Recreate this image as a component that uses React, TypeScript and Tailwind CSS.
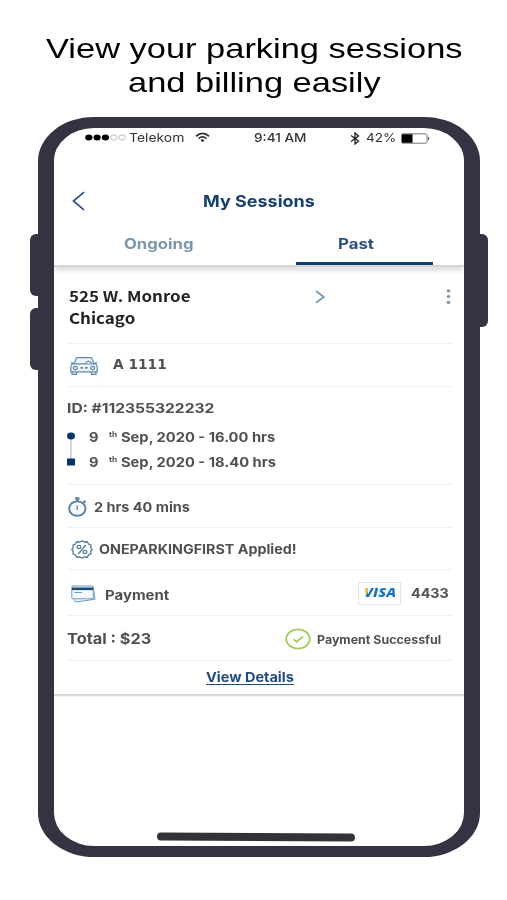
import React from 'react';
import clsx from 'clsx';

interface WideProps {
  className?: string;
  children: React.ReactNode;
}

// Extended lettering: glyphs are stretched from their left edge
const Wide: React.FC<WideProps> = ({ className, children }) => (
  <span className={clsx('block w-max origin-left whitespace-pre leading-none', className)}>{children}</span>
);

const StatusBar: React.FC = () => (
  <div className="flex h-[20px] items-center pl-[31px] text-[#333]">
    <svg className="w-[42px] shrink-0" height="8" viewBox="0 0 42 8">
      <g fill="#000">
        <ellipse cx="3.8" cy="3.5" rx="3.6" ry="3" />
        <ellipse cx="12.1" cy="3.5" rx="3.6" ry="3" />
        <ellipse cx="20.4" cy="3.5" rx="3.6" ry="3" />
      </g>
      <g fill="#fff" stroke="#aaa" strokeWidth="0.8">
        <ellipse cx="28.8" cy="3.5" rx="3.2" ry="2.7" />
        <ellipse cx="37" cy="3.5" rx="3.2" ry="2.7" />
      </g>
    </svg>
    <div className="w-[68px] pb-[1px] pl-[2px]">
      <Wide className="scale-x-[1.16] text-[12px]">Telekom</Wide>
    </div>
    <svg className="mb-[2px] w-[15px] shrink-0" height="11" viewBox="0 0 15 11" fill="none" stroke="#333" strokeWidth="1.8">
      <path d="M1 4.2 Q7.5 -1.4 14 4.2" />
      <path d="M3.5 6.6 Q7.5 3.2 11.5 6.6" />
      <path d="M5.4 8 Q7.5 6.6 9.6 8 L7.5 10.3Z" fill="#333" stroke="none" />
    </svg>
    <div className="w-[96px] pl-[44px]">
      <Wide className="scale-x-[1.13] text-[12px] font-medium">9:41 AM</Wide>
    </div>
    <svg className="ml-[44px] w-[10px] shrink-0" height="13" viewBox="0 0 10 13" fill="none" stroke="#222" strokeWidth="1.3">
      <path d="M1 3.5 L8.5 9 L5 12 V1 L8.5 4 L1 9.5" />
    </svg>
    <div className="w-[41px] pl-[6px]">
      <Wide className="scale-x-[1.13] text-[12px]">42%</Wide>
    </div>
    <svg className="w-[30px] shrink-0" height="11" viewBox="0 0 30 11">
      <rect x="0.5" y="0.8" width="25.5" height="9.4" rx="1.5" fill="#fff" stroke="#777" />
      <path d="M1 1.3 H11.5 V9.7 H1Z" fill="#000" />
      <path d="M27 3.5 Q29.5 5.5 27 7.5Z" fill="#444" />
    </svg>
  </div>
);

const Header: React.FC = () => (
  <div className="relative z-10 h-[119px] border-b-2 border-[#d5d5d5] bg-white shadow-[0_5px_4px_-1px_rgba(0,0,0,0.12)]">
    <div className="flex h-[73px] items-end pb-[9px] pl-[18px]">
      <svg className="mb-[1px] w-[13px]" height="20" viewBox="0 0 13 20" fill="none" stroke="#2a5288" strokeWidth="1.7">
        <path d="M12 1.2 L1.5 10 L12 18.8" />
      </svg>
      <div className="pb-[3px] pl-[118px]">
        <Wide className="scale-x-[1.09] text-[16.5px] font-bold text-[#17406f]">My Sessions</Wide>
      </div>
    </div>
    <div className="flex h-[44px] font-bold">
      <div className="w-[242px] pl-[70px] pt-[16px]">
        <Wide className="scale-x-[1.15] text-[14.5px] text-[#7b97ab]">Ongoing</Wide>
      </div>
      <div className="h-[44px] w-[137px] border-b-[3px] border-[#163d70] pl-[42px] pt-[16px]">
        <Wide className="scale-x-[1.16] text-[14.5px] text-[#2b5080]">Past</Wide>
      </div>
    </div>
  </div>
);

const CarIcon: React.FC = () => (
  <svg className="w-[28px] shrink-0" height="18" viewBox="0 0 28 18" fill="#eef4f8" stroke="#5f88a8" strokeWidth="1.2">
    <path d="M2 14 V17.3 H6.5 V14 M21.5 14 V17.3 H26 V14" />
    <path d="M3.8 7.4 L6.2 1.6 Q6.6 0.7 7.5 0.7 H20.5 Q21.4 0.7 21.8 1.6 L24.4 7.4" />
    <path d="M0.5 5.8 H3.2 M24.8 5.8 H27.5 M3.2 6.8 Q0.8 7.6 0.8 9.5 V14.8 H27.2 V9.5 Q27.2 7.6 24.8 6.8Z" />
    <ellipse cx="5.3" cy="11" rx="2" ry="1.6" />
    <ellipse cx="22.7" cy="11" rx="2" ry="1.6" />
    <path d="M10.5 10.8 H13.2 M15 10.8 H17.7" strokeWidth="1.8" />
    <path d="M15.5 6.6 Q18.5 1.5 21.5 6.6" />
  </svg>
);

const StopwatchIcon: React.FC = () => (
  <svg className="mb-[2px] w-[19px] shrink-0" height="20" viewBox="0 0 19 20" fill="none" stroke="#5b7f9e" strokeWidth="1.9">
    <ellipse cx="9.3" cy="11.6" rx="8.2" ry="7.2" fill="#f5f9fb" />
    <path d="M7 1.4 H11.6 M9.3 1.4 V4.5 M15.6 4 L17.4 5.6" strokeWidth="2.4" />
    <path d="M9.3 8.3 V13" stroke="#6f9a8a" strokeWidth="1.5" />
  </svg>
);

const PromoIcon: React.FC = () => (
  <svg className="w-[22px] shrink-0" height="19" viewBox="0 0 22 19" fill="none" stroke="#547b9b" strokeWidth="1.3">
    <path d="M11 .9 L13.4 2 L16.3 1.8 L17.5 4 L20 5.2 L19.7 7.6 L21.2 9.5 L19.7 11.5 L20 13.8 L17.5 15 L16.3 17.2 L13.4 17 L11 18.1 L8.6 17 L5.7 17.2 L4.5 15 L2 13.8 L2.3 11.5 L.8 9.5 L2.3 7.6 L2 5.2 L4.5 4 L5.7 1.8 L8.6 2Z" />
    <path d="M14.8 5 L7.3 14" />
    <ellipse cx="7.9" cy="7" rx="1.9" ry="1.6" />
    <ellipse cx="14" cy="12" rx="1.9" ry="1.6" />
  </svg>
);

const CardIcon: React.FC = () => (
  <svg className="w-[25px] shrink-0" height="18" viewBox="0 0 25 18" fill="#f4f8fa" stroke="#6e9bbb" strokeWidth="1">
    <path d="M3 14 L4.3 17 L24 14.3 L22.5 4" />
    <rect x="0.8" y="1" width="21.5" height="12.8" rx="1" />
    <path d="M1 3.8 H22.2" stroke="#174c79" strokeWidth="2.6" />
    <path d="M3.5 7.5 H11" />
  </svg>
);

const Timeline: React.FC = () => (
  <div className="flex">
    <svg className="-ml-[1px] w-[8px] shrink-0" height="36" viewBox="0 0 8 36">
      <path d="M4 5 V28" stroke="#ccd0d4" strokeWidth="1.6" />
      <ellipse cx="4" cy="5" rx="4" ry="3.4" fill="#073567" />
      <rect x="0" y="27.5" width="8" height="7" fill="#073567" />
    </svg>
    <div className="pl-[14px]">
      {['16.00', '18.40'].map((time) => (
        <div key={time} className="flex h-[25px]">
          <div className="w-[20px]">
            <Wide className="scale-x-[1.12] text-[13px]">9</Wide>
          </div>
          <div className="w-[12px]">
            <Wide className="scale-x-[1.2] text-[7px]">th</Wide>
          </div>
          <Wide className="scale-x-[1.13] text-[13px]">{`Sep, 2020 - ${time} hrs`}</Wide>
        </div>
      ))}
    </div>
  </div>
);

const SessionCard: React.FC = () => (
  <div className="h-[429px] border-b-2 border-[#dadada] pl-[14px] font-bold text-[#505050] shadow-[0_1px_1px_rgba(0,0,0,0.05)]">
    <div className="w-[384px] *:border-b *:border-[#f0f0f0]">
      <div className="flex h-[77px] pt-[21px]">
        <div className="w-[246px] pl-[1px] font-['Noto_Sans_CJK_SC','Noto_Sans',sans-serif] font-bold text-[#222]">
          <Wide className="h-[22px] scale-x-[1.13] text-[15px]">525 W. Monroe</Wide>
          <Wide className="scale-x-[1.13] text-[15px]">Chicago</Wide>
        </div>
        <svg className="mt-[1px] w-[12px]" height="16" viewBox="0 0 12 16" fill="none" stroke="#7595b5" strokeWidth="1.7">
          <path d="M2 2 L9.8 8 L2 13.8" />
        </svg>
        <svg className="ml-[120px] -mt-[1px] w-[5px]" height="20" viewBox="0 0 5 20" fill="#8097ab">
          <ellipse cx="2.5" cy="3.8" rx="1.9" ry="1.6" />
          <ellipse cx="2.5" cy="9.5" rx="1.9" ry="1.6" />
          <ellipse cx="2.5" cy="15.3" rx="1.9" ry="1.6" />
        </svg>
      </div>

      <div className="flex h-[43px] items-center pl-[2px] pt-[2px]">
        <CarIcon />
        <div className="pb-[2px] pl-[15px] font-['DejaVu_Sans',sans-serif]">
          <Wide className="scale-x-[1.02] text-[13.5px] font-bold">A 1111</Wide>
        </div>
      </div>

      <div className="h-[98px] pt-[15px]">
        <Wide className="-ml-[1px] h-[29px] scale-x-[1.2] text-[13px]">ID: #112355322232</Wide>
        <Timeline />
      </div>

      <div className="flex h-[43px] items-center pt-[3px]">
        <StopwatchIcon />
        <div className="pl-[7px]">
          <Wide className="scale-x-[1.11] text-[13px]">2 hrs 40 mins</Wide>
        </div>
      </div>

      <div className="flex h-[42px] items-center pl-[3px] pt-[1px]">
        <PromoIcon />
        <div className="pl-[6px]">
          <Wide className="scale-x-[1.1] text-[13px]">ONEPARKINGFIRST Applied!</Wide>
        </div>
      </div>

      <div className="flex h-[46px] items-center pl-[3px] pt-[3px]">
        <CardIcon />
        <div className="w-[262px] pl-[9px] pt-[3px]">
          <Wide className="scale-x-[1.15] text-[13px]">Payment</Wide>
        </div>
        <div className="mb-[2px] flex h-[23px] w-[43px] shrink-0 items-center border border-[#e6e6e6] pl-[5px] font-['Open_Sans',sans-serif]">
          <Wide className="scale-x-[1.22] bg-[linear-gradient(112deg,#f4b342_16%,#1676b8_17%)] bg-clip-text text-[12px] font-extrabold italic text-transparent">VISA</Wide>
        </div>
        <div className="pb-[1px] pl-[10px]">
          <Wide className="scale-x-[1.1] text-[13px]">4433</Wide>
        </div>
      </div>

      <div className="flex h-[45px] items-center">
        <div className="-ml-[1px] w-[218px] pt-[1px]">
          <Wide className="scale-x-[1.09] text-[15px]">Total : $23</Wide>
        </div>
        <svg className="mt-[2px] w-[26px] shrink-0" height="22" viewBox="0 0 26 22" fill="none" stroke="#a5cc63" strokeWidth="1.8">
          <ellipse cx="13" cy="11" rx="11.8" ry="9.6" />
          <path d="M8.6 11.4 L11.7 13.8 L18 8.5" />
        </svg>
        <div className="pl-[6px] pt-[5px]">
          <Wide className="scale-x-[1.11] text-[11.2px]">Payment Successful</Wide>
        </div>
      </div>
    </div>
    <div className="pl-[138px] pt-[10px]">
      <Wide className="scale-x-[1.115] text-[13px] text-[#254b7c] underline decoration-1 underline-offset-2">View Details</Wide>
    </div>
  </div>
);

const Phone: React.FC = () => (
  <div className="relative ml-[38px] h-[740px] w-[442px]">
    <div className="absolute -left-[8px] top-[117px] h-[62px] w-[16px] rounded-l-[6px] bg-[#353343]" />
    <div className="absolute -left-[8px] top-[191px] h-[62px] w-[16px] rounded-l-[6px] bg-[#353343]" />
    <div className="absolute -right-[8px] top-[117px] h-[93px] w-[16px] rounded-r-[6px] bg-[#353343]" />
    <div className="relative flex h-full flex-col overflow-hidden rounded-[56px/44px] border-x-[16px] border-y-[11px] border-[#353343] bg-white font-[Inter,sans-serif]">
      <StatusBar />
      <Header />
      <SessionCard />
      <div className="ml-[103px] mt-[137px] h-[8px] w-[198px] rotate-[0.3deg] rounded-full bg-[#333]" />
    </div>
  </div>
);

const App: React.FC = () => {
  return (
    <div className="h-[900px] w-[507px] overflow-hidden bg-white">
      <div className="h-[117px] pt-[34px] font-['Liberation_Sans',sans-serif] text-[28.5px] text-black">
        <div className="h-[34px] pl-[46px]">
          <Wide className="scale-x-[1.208]">View your parking sessions</Wide>
        </div>
        <div className="pl-[128px]">
          <Wide className="scale-x-[1.208]">and billing easily</Wide>
        </div>
      </div>
      <Phone />
    </div>
  );
};

export default App;
